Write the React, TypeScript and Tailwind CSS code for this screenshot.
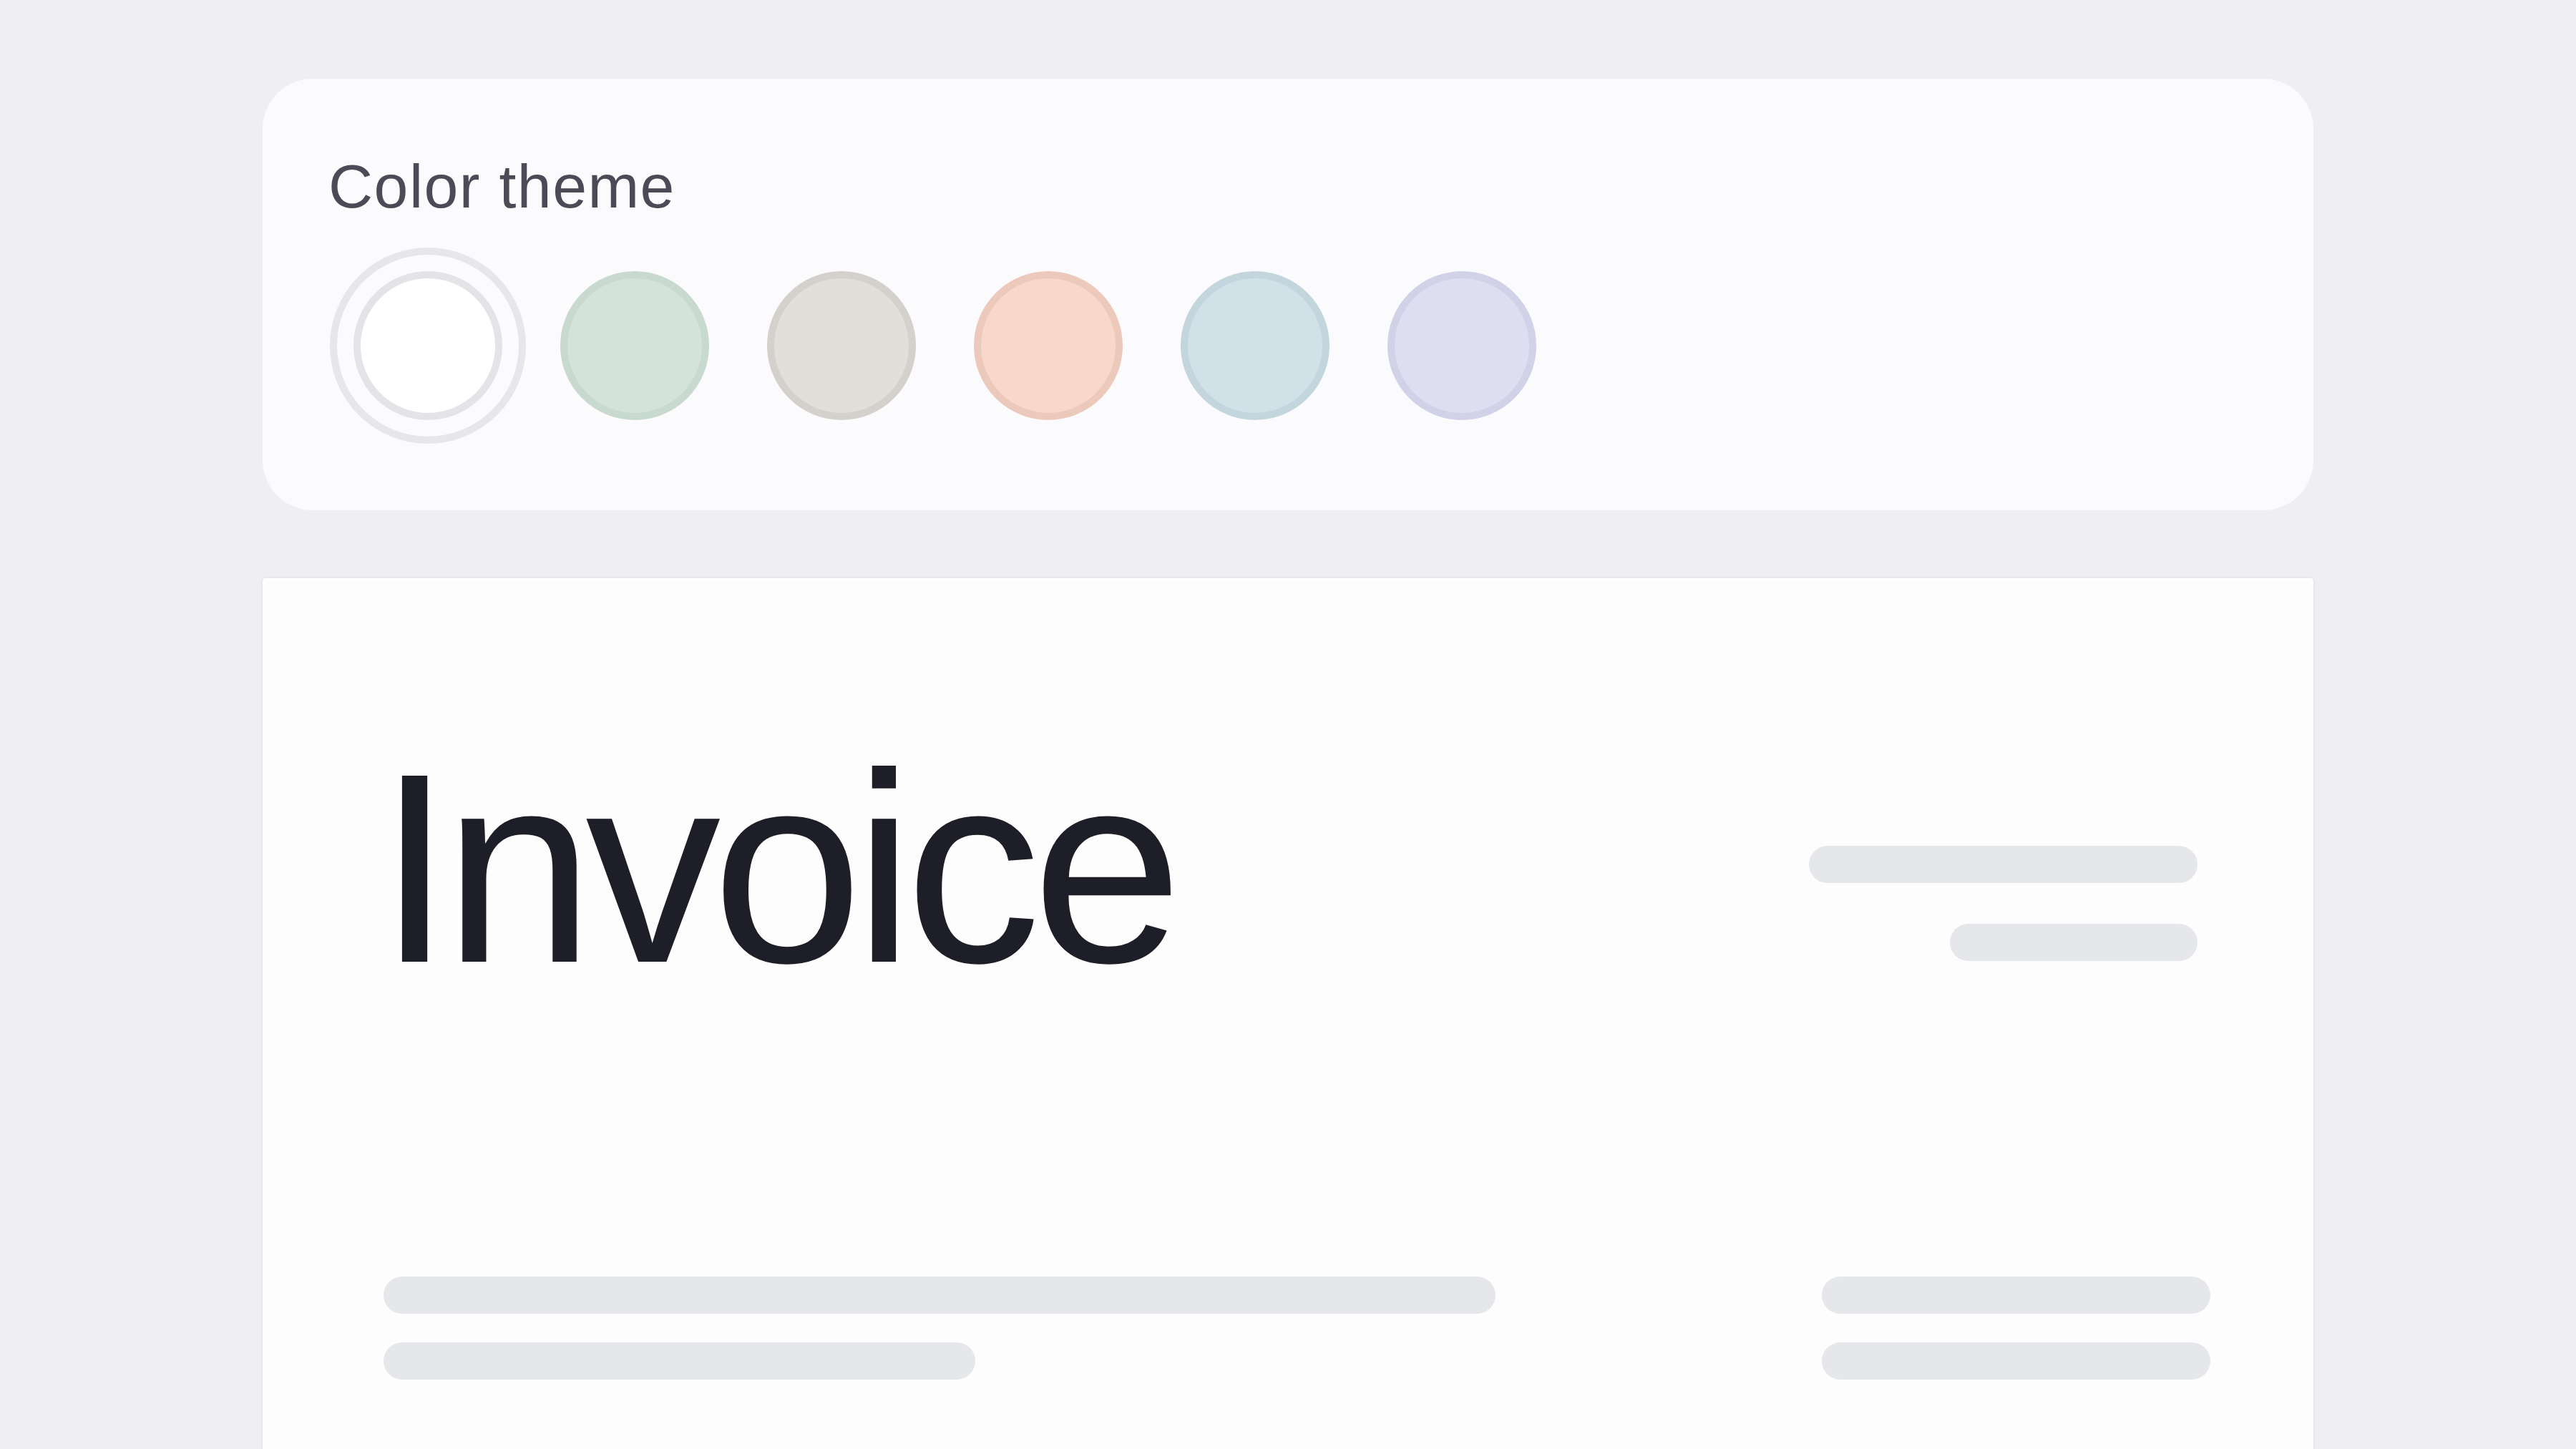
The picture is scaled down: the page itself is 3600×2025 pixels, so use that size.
import React from 'react';

type Swatch = {
  name: string;
  fill: string;
  ring: string;
  selected?: boolean;
};

const swatches: Swatch[] = [
  { name: 'Default', fill: 'bg-white', ring: 'border-[#e4e4e8]', selected: true },
  { name: 'Sage', fill: 'bg-[#d4e3d9]', ring: 'border-[#c8d9cf]' },
  { name: 'Stone', fill: 'bg-[#e2dfda]', ring: 'border-[#d4d0cb]' },
  { name: 'Peach', fill: 'bg-[#f7d8c9]', ring: 'border-[#ecc9ba]' },
  { name: 'Mist', fill: 'bg-[#d0e1e8]', ring: 'border-[#c3d5dd]' },
  { name: 'Lavender', fill: 'bg-[#dddff0]', ring: 'border-[#d1d2e8]' }
];

function ThemePicker() {
  return (
    <section className="h-[603px] rounded-[70px] bg-[#fbfbfe] pl-[92px] pt-[107px]">
      <h2 className="text-[86px] leading-none tracking-[1.5px] text-[#4b4b57]">
        Color theme
      </h2>
      <div className="ml-[35px] mt-[76px] flex items-center gap-[81px]">
        {swatches.map((swatch) => (
          <button
            key={swatch.name}
            type="button"
            aria-label={swatch.name}
            className={`h-[208px] w-[208px] rounded-full border-[10px] ${swatch.fill} ${swatch.ring} ${
              swatch.selected
                ? 'outline outline-[10px] outline-offset-[23px] outline-[#e7e7eb]'
                : ''
            }`}
          />
        ))}
      </div>
    </section>
  );
}

function Bar({ width }: { width: string }) {
  return <div className={`h-[52px] rounded-full bg-[#e6e7ea] ${width}`} />;
}

function InvoicePreview() {
  return (
    <section className="h-[1300px] rounded-t-[4px] border-t-[3px] border-white bg-[#fdfdfd] pl-[160px] pr-[144px] pt-[213px] shadow-[0_0_0_2px_rgba(228,228,234,0.6)]">
      <div className="flex items-start justify-between pr-[18px]">
        <h1 className="text-[378px] font-normal leading-none tracking-[-12px] text-[#1d1e27]">
          Invoice
        </h1>
        <div className="mt-[158px] flex flex-col items-end gap-[57px]">
          <Bar width="w-[543px]" />
          <Bar width="w-[346px]" />
        </div>
      </div>

      <div className="mt-[382px] flex items-start justify-between pl-[9px]">
        <div className="flex flex-col gap-[40px]">
          <Bar width="w-[1554px]" />
          <Bar width="w-[827px]" />
        </div>
        <div className="flex flex-col gap-[40px]">
          <Bar width="w-[543px]" />
          <Bar width="w-[543px]" />
        </div>
      </div>
    </section>
  );
}

export default function App() {
  return (
    <div
      className="h-[2025px] overflow-hidden bg-[#efeff3] pt-[110px]"
      style={{ fontFamily: '"Liberation Sans", Arial, sans-serif' }}
    >
      <div className="mx-auto flex w-[2866px] flex-col gap-[95px]">
        <ThemePicker />
        <InvoicePreview />
      </div>
    </div>
  );
}
